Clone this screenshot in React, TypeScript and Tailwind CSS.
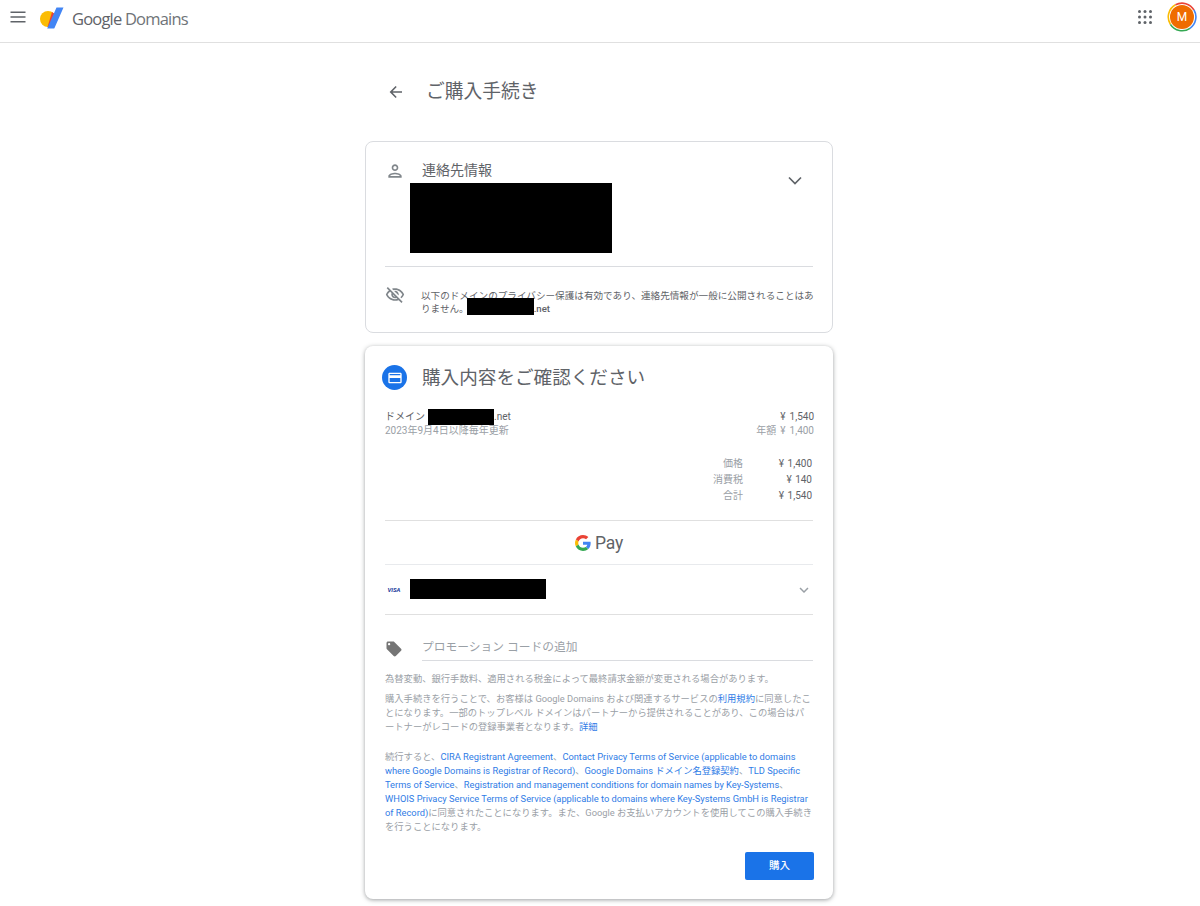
import React from "react";

const FONT = "font-['Roboto','Noto_Sans_CJK_JP',sans-serif]";

function Row({ label, value }: { label: string; value: string }) {
  return (
    <div className="flex justify-end h-[16px] items-center text-[10px] leading-[16px] [word-spacing:1px]">
      <span className="text-[#9aa0a6]">{label}</span>
      <span className="w-[69px] text-right text-[#5f6368]">{value}</span>
    </div>
  );
}

export default function App() {
  return (
    <div className={`${FONT} bg-white min-h-[906px] text-[#5f6368] overflow-hidden`}>
      <header className="h-[43px] border-b border-[#e0e0e0] flex items-center">
        <svg width="24" height="24" viewBox="0 0 24 24" className="ml-[6px] mb-[8px] text-[#5f6368]" fill="currentColor">
          <path d="M4.5 6.5h15v1.5h-15zM4.5 11.2h15v1.5h-15zM4.5 16h15v1.5h-15z" />
        </svg>
        <svg width="26" height="24" viewBox="0 0 26 24" className="ml-[9px] mb-[6px]">
          <circle cx="9" cy="13" r="8" fill="#fbbc04" />
          <path d="M13 6 a8 8 0 0 1 3.600 10.500 L12.500 20 A8 8 0 0 1 8.500 21 Z" fill="#ea4335" />
          <path d="M17.500 1.500 H24.500 L15.500 22 a1 1 0 0 1 -1 .6 H8.200 Z" fill="#4285f4" />
        </svg>
        <div className="ml-[7px] mb-[4px] text-[16.500px] leading-[24px] text-[#5f6368] font-['Open_Sans',sans-serif] tracking-[-0.8px]">
          Google <span className="text-[#6f7478]">Domains</span>
        </div>
        <div className="ml-auto flex items-center mb-[8px]">
          <svg width="14" height="14" viewBox="0 0 14 14" fill="#5f6368" className="mr-[15px]">
            {[1.5, 7, 12.5].flatMap((y) =>
              [1.5, 7, 12.5].map((x) => <circle key={`${x}-${y}`} cx={x} cy={y} r="1.5" />)
            )}
          </svg>
          <div className="relative w-[30px] h-[30px] mr-[3px] flex items-center justify-center">
            <svg width="30" height="30" viewBox="0 0 30 30" className="absolute inset-0">
              <path d="M3.400 22.300A13.800 13.800 0 0 1 8.500 2.800" stroke="#fbbc04" strokeWidth="1.600" fill="none" />
              <path d="M8.500 2.800A13.800 13.800 0 0 1 27 8" stroke="#ea4335" strokeWidth="1.600" fill="none" />
              <path d="M27 8A13.800 13.800 0 0 1 23 26.300" stroke="#4285f4" strokeWidth="1.600" fill="none" />
              <path d="M23 26.300A13.800 13.800 0 0 1 3.400 22.300" stroke="#34a853" strokeWidth="1.600" fill="none" />
            </svg>
            <div className="w-[24px] h-[24px] rounded-full bg-[#ef6c00] text-white text-[12px] flex items-center justify-center">
              M
            </div>
          </div>
        </div>
      </header>

      <main className="w-[468px] ml-[365px]">
        <div className="h-[98px] flex items-center pb-[1px]">
          <svg width="24" height="24" viewBox="0 0 24 24" fill="#5f6368" className="ml-[19px]">
            <path d="M18 11.200H8.600l4.100-4.100L11.600 6l-6 6 6 6 1.100-1.100-4.100-4.100H18z" />
          </svg>
          <h1 className="ml-[18px] text-[18.750px] leading-[28px] text-[#5f6368] font-normal">ご購入手続き</h1>
        </div>

        <section className="h-[192px] border border-[#dadce0] rounded-[8px] px-[19px]">
          <div className="h-[125px] border-b border-[#dadce0] relative flex">
            <svg width="20" height="20" viewBox="0 0 24 24" fill="#80868b" className="mt-[19px] shrink-0">
              <path d="M12 6c1.100 0 2 .9 2 2s-.9 2-2 2-2-.9-2-2 .9-2 2-2m0 10c2.700 0 5.800 1.290 6 2H6c.23-.72 3.310-2 6-2m0-12C9.790 4 8 5.790 8 8s1.790 4 4 4 4-1.790 4-4-1.790-4-4-4zm0 10c-2.670 0-8 1.340-8 4v2h16v-2c0-2.660-5.330-4-8-4z" />
            </svg>
            <div className="ml-[17px] mt-[18px] text-[14px] leading-[20px] text-[#5f6368]">連絡先情報</div>
            <div className="absolute left-[25px] top-[41px] w-[202px] h-[70px] bg-black" />
            <svg width="24" height="24" viewBox="0 0 24 24" fill="none" stroke="#5f6368" strokeWidth="1.700" className="absolute right-[6px] top-[26px]">
              <path d="M6 9.500l6 6 6-6" />
            </svg>
          </div>
          <div className="flex relative">
            <svg width="20" height="20" viewBox="0 0 24 24" fill="#80868b" className="mt-[18px] shrink-0">
              <path d="M12 6c3.790 0 7.170 2.130 8.820 5.500-.59 1.220-1.420 2.270-2.410 3.120l1.410 1.410c1.390-1.230 2.490-2.770 3.180-4.530C21.270 7.110 17 4 12 4c-1.270 0-2.490.2-3.640.57l1.650 1.650C10.660 6.090 11.320 6 12 6zm-1.070 1.140L13 9.210c.57.25 1.030.71 1.280 1.280l2.070 2.070c.08-.34.14-.7.14-1.070C16.500 9.010 14.480 7 12 7c-.37 0-.72.05-1.070.14zM2.010 3.870l2.680 2.680C3.060 7.830 1.770 9.530 1 11.500 2.730 15.890 7 19 12 19c1.520 0 2.980-.29 4.320-.82l3.420 3.420 1.410-1.410L3.420 2.450 2.010 3.870zm7.500 7.500l2.610 2.610c-.04.01-.08.02-.12.02-1.380 0-2.500-1.120-2.500-2.500 0-.05.01-.08.01-.13zm-3.400-3.400l1.750 1.750c-.23.55-.36 1.150-.36 1.780 0 2.480 2.020 4.500 4.500 4.500.63 0 1.230-.13 1.770-.36l.98.98c-.88.24-1.800.38-2.750.38-3.790 0-7.170-2.130-8.820-5.500.7-1.430 1.720-2.610 2.930-3.530z" />
            </svg>
            <p className="ml-[16px] mt-[23px] text-[9.600px] leading-[12.500px] text-[#5f6368] whitespace-nowrap">
              以下のドメインのプライバシー保護は有効であり、連絡先情報が一般に公開されることはあ
              <br />
              りません。<span className="inline-block w-[67px] h-[17px] bg-black align-top mt-[-5px] ml-[-2px]" />
              <span className="font-medium">.net</span>
            </p>
          </div>
        </section>

        <section className="mt-[13px] h-[553px] bg-white rounded-[8px] shadow-[0_1px_4px_rgba(60,64,67,0.5)] px-[20px]">
          <div className="h-[54px] flex items-center pt-[9px]">
            <div className="w-[25px] h-[25px] rounded-full bg-[#1a73e8] flex items-center justify-center ml-[-3px]">
              <svg width="16" height="16" viewBox="0 0 24 24" fill="white">
                <path d="M20 4H4c-1.100 0-2 .9-2 2v12c0 1.100.9 2 2 2h16c1.100 0 2-.9 2-2V6c0-1.100-.9-2-2-2zm0 14H4v-6h16v6zm0-10H4V6h16v2z" />
              </svg>
            </div>
            <h2 className="ml-[15px] mt-[1px] text-[18.600px] leading-[26px] font-normal text-[#5f6368]">購入内容をご確認ください</h2>
          </div>

          <div className="mt-[10px] flex justify-between text-[10px] leading-[14px]">
            <div>
              <div className="flex items-center h-[14px]">
                <span>ドメイン</span>
                <span className="w-[66px] h-[16px] bg-black ml-[3px]" />
                <span>.net</span>
              </div>
              <div className="text-[#9aa0a6]">2023年9月4日以降毎年更新</div>
            </div>
            <div className="text-right [word-spacing:1.500px] mr-[-1px]">
              <div>¥ 1,540</div>
              <div className="text-[#9aa0a6]">年額 ¥ 1,400</div>
            </div>
          </div>

          <div className="mt-[18px] pr-[1px] h-[65px] border-b border-[#e0e0e0]">
            <Row label="価格" value="¥ 1,400" />
            <Row label="消費税" value="¥ 140" />
            <Row label="合計" value="¥ 1,540" />
          </div>

          <div className="h-[44px] border-b border-[#e8eaed] flex items-center justify-center">
            <svg width="16" height="16" viewBox="0 0 48 48">
              <path fill="#ea4335" d="M24 9.500c3.500 0 6.700 1.200 9.200 3.600l6.900-6.900C35.900 2.400 30.500 0 24 0 14.600 0 6.500 5.400 2.600 13.200l8 6.200C12.400 13.700 17.700 9.500 24 9.500z" />
              <path fill="#4285f4" d="M47 24.500c0-1.600-.1-3.100-.4-4.500H24v9h12.900c-.6 3-2.200 5.500-4.700 7.200l7.700 6C44.400 37.900 47 31.800 47 24.500z" />
              <path fill="#fbbc04" d="M10.600 28.600c-.5-1.400-.8-3-.8-4.600s.3-3.200.8-4.600l-8-6.200C.9 16.500 0 20.100 0 24s.9 7.500 2.600 10.800z" />
              <path fill="#34a853" d="M24 48c6.500 0 11.900-2.100 15.900-5.800l-7.700-6c-2.100 1.400-4.900 2.300-8.200 2.300-6.300 0-11.600-4.200-13.500-10l-8 6.200C6.500 42.600 14.600 48 24 48z" />
            </svg>
            <span className="ml-[4px] text-[17.500px] leading-[24px] text-[#5f6368] tracking-[-0.2px]">Pay</span>
          </div>

          <div className="h-[50px] border-b border-[#e0e0e0] flex items-center relative">
            <span className="w-[18px] text-[6px] font-bold italic text-[#1a3a9c] text-center leading-none">VISA</span>
            <div className="ml-[7px] w-[136px] h-[20px] bg-black mb-[2px]" />
            <svg width="18" height="18" viewBox="0 0 24 24" fill="#9aa0a6" className="ml-auto">
              <path d="M7.400 8.600 12 13.200l4.600-4.600L18 10l-6 6-6-6z" />
            </svg>
          </div>

          <div className="h-[46px] flex items-end">
            <svg width="18" height="18" viewBox="0 0 24 24" fill="#757575" className="mb-[3px] shrink-0">
              <path d="M21.400 11.600l-9-9C12 2.200 11.500 2 11 2H4c-1.100 0-2 .9-2 2v7c0 .6.200 1.100.6 1.400l9 9c.4.400.9.600 1.400.600s1-.2 1.400-.6l7-7c.4-.4.600-.9.600-1.400 0-.6-.2-1.100-.6-1.400zM5.500 7C4.700 7 4 6.300 4 5.500S4.700 4 5.500 4 7 4.700 7 5.500 6.300 7 5.500 7z" />
            </svg>
            <div className="ml-[19px] flex-1 h-[26px] border-b border-[#dadce0] text-[11.750px] leading-[24px] text-[#9aa0a6]">
              プロモーション コードの追加
            </div>
          </div>

          <div className="mt-[11px] text-[9.300px] leading-[14px] text-[#9aa0a6] whitespace-nowrap">
            <p>為替変動、銀行手数料、適用される税金によって最終請求金額が変更される場合があります。</p>
            <p className="mt-[6px]">
              購入手続きを行うことで、お客様は Google Domains および関連するサービスの
              <span className="text-[#2f7ce6]">利用規約</span>に同意したこ
              <br />
              とになります。一部のトップレベル ドメインはパートナーから提供されることがあり、この場合はパ
              <br />
              ートナーがレコードの登録事業者となります。<span className="text-[#2f7ce6]">詳細</span>
            </p>
            <p className="mt-[16px]">
              続行すると、<span className="text-[#2f7ce6]">CIRA Registrant Agreement</span>、
              <span className="text-[#2f7ce6]">Contact Privacy Terms of Service (applicable to domains</span>
              <br />
              <span className="text-[#2f7ce6]">where Google Domains is Registrar of Record)</span>、
              <span className="text-[#2f7ce6]">Google Domains ドメイン名登録契約</span>、
              <span className="text-[#2f7ce6]">TLD Specific</span>
              <br />
              <span className="text-[#2f7ce6]">Terms of Service</span>、
              <span className="text-[#2f7ce6]">Registration and management conditions for domain names by Key-Systems</span>、
              <br />
              <span className="text-[#2f7ce6]">WHOIS Privacy Service Terms of Service (applicable to domains where Key-Systems GmbH is Registrar</span>
              <br />
              <span className="text-[#2f7ce6]">of Record)</span>に同意されたことになります。また、Google お支払いアカウントを使用してこの購入手続き
              <br />
              を行うことになります。
            </p>
          </div>

          <div className="flex justify-end mt-[18px] mr-[-1px]">
            <button className="w-[69px] h-[28px] bg-[#1a73e8] rounded-[2px] text-white text-[10.500px] font-medium">購入</button>
          </div>
        </section>
      </main>
    </div>
  );
}
